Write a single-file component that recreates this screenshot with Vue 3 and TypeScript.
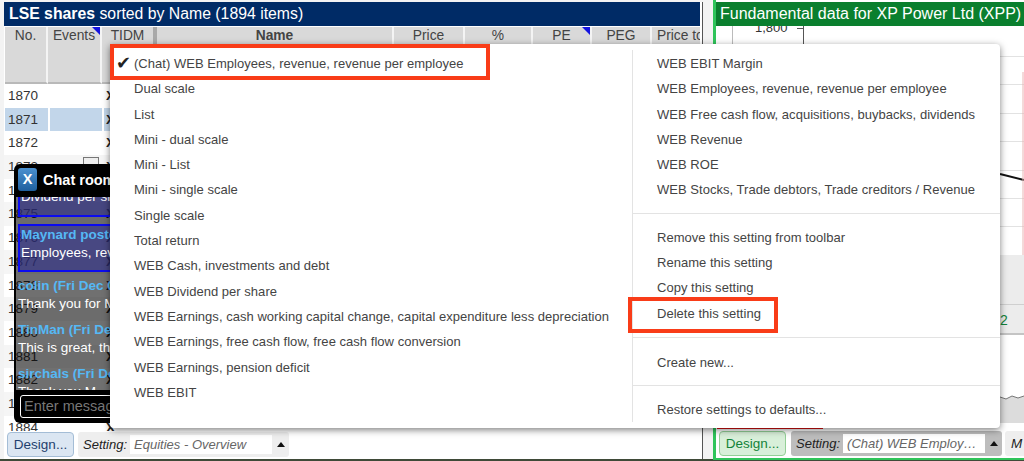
<script setup lang="ts">
const headers = [
  { t: 'No.', w: 43 }, { t: 'Events', w: 54, tri: true }, { t: 'TIDM', w: 55, thick: true },
  { t: 'Name', w: 237, b: true }, { t: 'Price', w: 71 }, { t: '%', w: 68 },
  { t: 'PE', w: 59, tri: true }, { t: 'PEG', w: 60 }, { t: 'Price to', w: 48, clip: true },
]
const rows = [1870, 1871, 1872, 1873, 1874, 1875, 1876, 1877, 1878, 1879, 1880, 1881, 1882, 1883, 1884]
const left = ['Dual scale', 'List', 'Mini - dual scale', 'Mini - List', 'Mini - single scale', 'Single scale', 'Total return',
  'WEB Cash, investments and debt', 'WEB Dividend per share',
  'WEB Earnings, cash working capital change, capital expenditure less depreciation',
  'WEB Earnings, free cash flow, free cash flow conversion', 'WEB Earnings, pension deficit', 'WEB EBIT']
const right1 = ['WEB EBIT Margin', 'WEB Employees, revenue, revenue per employee',
  'WEB Free cash flow, acquisitions, buybacks, dividends', 'WEB Revenue', 'WEB ROE',
  'WEB Stocks, Trade debtors, Trade creditors / Revenue']
const right2 = ['Remove this setting from toolbar', 'Rename this setting', 'Copy this setting', 'Delete this setting']
</script>

<template>
  <div class="page">
    <section class="panel left-panel">
      <div class="title navy"><b>LSE shares</b> sorted by Name (1894 items)</div>
      <div class="thead">
        <div v-for="h in headers" :key="h.t" class="th" :class="{ bold: h.b, clip: h.clip, thick: h.thick }" :style="{ width: h.w + 'px' }">
          {{ h.t }}<i v-if="h.tri" class="tri"></i>
        </div>
      </div>
      <div class="tbody">
        <div v-for="(r, i) in rows" :key="r" class="tr" :class="{ sel: r === 1871, odd: i > 2 && i % 2 === 1 }">
          <span class="no">{{ r }}</span>
          <span class="ev"><i v-if="r === 1873" class="evbox"></i></span>
          <span class="tidm">X</span>
        </div>
      </div>
      <div class="foot">
        <button class="design blue">Design...</button>
        <div class="setting">
          <em>Setting:</em><span class="field">Equities - Overview</span><i class="up"></i>
        </div>
      </div>
    </section>

    <section class="panel right-panel">
      <div class="title green">Fundamental data for XP Power Ltd (XPP)</div>
      <div class="chart">
        <span class="tick">1,800</span>
        <span class="vline v1"></span>
        <span class="vline v2"></span>
        <span class="tickmark"></span>
        <span class="grid"></span>
        <span class="band"></span>
        <svg class="plot" width="308" height="404" viewBox="0 0 308 404">
          <polyline points="284,148 308,154" fill="none" stroke="#111" stroke-width="2" />
          <line x1="307" y1="46" x2="307" y2="229" stroke="#e8b4b4" stroke-width="1" />
          <polygon points="284,371 290,373 296,370 302,372 308,370 308,397 284,397" fill="#dcdcdc" />
          <polyline points="284,371 290,373 296,370 302,372 308,370" fill="none" stroke="#777" stroke-width="1" />
        </svg>
        <span class="num">2</span>
        <span class="redline"></span>
      </div>
      <div class="foot gfoot">
        <button class="design grn">Design...</button>
        <div class="setting dark">
          <em>Setting:</em><span class="field">(Chat) WEB Employ…</span><i class="up"></i>
        </div>
        <div class="more"><em>M</em></div>
      </div>
    </section>

    <div class="chat">
      <div class="chat-head"><span class="x">X</span><b>Chat room</b></div>
      <div class="chat-body">
        <div class="msg boxed first"><p class="w">Dividend per share</p></div>
        <div class="msg boxed"><p class="u">Maynard posted</p><p class="w">Employees, revenue</p></div>
        <div class="msg"><p class="u">colin (Fri Dec 01</p><p class="w">Thank you for M</p></div>
        <div class="msg"><p class="u">TinMan (Fri Dec</p><p class="w">This is great, that</p></div>
        <div class="msg"><p class="u">sirchals (Fri Dec</p><p class="w">Thank you M</p></div>
      </div>
      <div class="chat-foot"><div class="chat-input">Enter message</div></div>
    </div>

    <div class="menu">
      <div class="col lcol">
        <div class="item checked"><span class="check">✔</span>(Chat) WEB Employees, revenue, revenue per employee</div>
        <div v-for="l in left" :key="l" class="item">{{ l }}</div>
      </div>
      <div class="col rcol">
        <div v-for="l in right1" :key="l" class="item">{{ l }}</div>
        <hr class="h1" />
        <div v-for="l in right2" :key="l" class="item">{{ l }}</div>
        <hr class="h2" />
        <div class="item">Create new...</div>
        <hr class="h3" />
        <div class="item">Restore settings to defaults...</div>
      </div>
    </div>

    <div class="red r1"></div>
    <div class="red r2"></div>
  </div>
</template>

<style>
body { margin: 0; }
</style>

<style scoped>
.page {
  position: relative;
  width: 1024px;
  height: 461px;
  overflow: hidden;
  display: flex;
  gap: 10px;
  padding: 2px 0 0 4px;
  box-sizing: border-box;
  background: linear-gradient(#f3f3f3 0 459px, #3f4a38 459px);
  font-family: "Liberation Sans", Arial, sans-serif;
  color: #333;
}
.panel {
  display: flex;
  flex-direction: column;
  box-sizing: border-box;
  background: #fff;
  overflow: hidden;
}
.left-panel {
  width: 699px;
  height: 457px;
  flex: none;
  padding-right: 2px;
  border-right: 1px solid #555;
}
.right-panel {
  flex: 1;
  height: 460px;
  margin-top: -2px;
  padding-top: 2px;
  border-left: 3px solid #2fc45a;
  border-bottom: 2px solid #2fc45a;
}
.title {
  height: 24px;
  flex: none;
  line-height: 24px;
  font-size: 15.8px;
  color: #fff;
  padding-left: 5px;
  white-space: nowrap;
}
.navy { background: #002b66; }
.green { background: #0a7f2e; font-size: 16px; padding-left: 4px; }
.thead {
  display: flex;
  height: 58px;
  flex: none;
  box-sizing: border-box;
  background: #fff;
  padding: 1px 0 0 1px;
}
.th {
  position: relative;
  flex: none;
  box-sizing: border-box;
  background: #d9d9d9;
  border-right: 2px solid #f4f4f4;
  border-bottom: 2px solid #b9b9b9;
  text-align: center;
  font-size: 13.8px;
  line-height: 17px;
  color: #444;
  overflow: hidden;
  white-space: nowrap;
}
.thick { border-right: 4px solid #a9a9a9; }
.bold { font-weight: bold; }
.clip { text-align: left; padding-left: 5px; border-right: 0; }
.tri {
  position: absolute;
  right: 0;
  top: 0;
  width: 0;
  height: 0;
  border-top: 8px solid #1414e0;
  border-left: 8px solid transparent;
}
.tbody { flex: 1; overflow: hidden; min-height: 0; }
.tr {
  display: flex;
  height: 23.7px;
  line-height: 23.7px;
  font-size: 13.5px;
  color: #333;
}
.no { width: 43px; margin-left: 1px; padding-left: 3px; box-sizing: border-box; }
.ev { position: relative; width: 52px; margin: 0 2px 0 2px; }
.evbox {
  position: absolute;
  right: 3px;
  top: 2px;
  width: 14px;
  height: 13px;
  border: 1px solid #777;
  background: #eee;
}
.tidm { font-weight: bold; color: #222; padding-left: 2px; }
.sel .no, .sel .ev, .sel .tidm { background: #c2d6ea; }
.sel .tidm { width: 40px; }
.odd { background: #f5f5f5; }
.foot {
  height: 28px;
  flex: none;
  display: flex;
  align-items: center;
  gap: 4px;
  padding: 0 0 1px 3px;
  box-sizing: border-box;
  background: #fff;
}
.design {
  width: 67px;
  height: 25px;
  padding: 0;
  font: 13.5px "Liberation Sans", Arial, sans-serif;
  border-radius: 4px;
}
.blue { background: #dbe6f2; border: 1px solid #a4bdd6; color: #1f3f6e; }
.grn { background: #d8efd9; border: 1px solid #93cf96; color: #13833a; }
.setting {
  display: flex;
  align-items: center;
  height: 25px;
  padding: 0 4px 0 5px;
  background: #eeeeee;
  border-radius: 3px;
  font-size: 13px;
  color: #222;
}
.dark { background: #bdbdbd; }
.field {
  width: 142px;
  height: 19px;
  line-height: 19px;
  margin-left: 3px;
  padding-left: 4px;
  box-sizing: border-box;
  background: #fff;
  font-style: italic;
  color: #666;
  white-space: nowrap;
}
.up {
  width: 0;
  height: 0;
  margin-left: 5px;
  border-left: 4px solid transparent;
  border-right: 4px solid transparent;
  border-bottom: 5px solid #111;
}
.chart { position: relative; flex: 1; background: #fff; overflow: hidden; min-height: 0; }
.tick { position: absolute; left: 39px; top: -6px; font-size: 13px; color: #333; }
.vline { position: absolute; top: 0; width: 1px; background: #555; }
.v1 { left: 16px; height: 20px; background: #bbb; }
.v2 { left: 87px; height: 20px; }
.tickmark { position: absolute; left: 81px; top: 2px; width: 6px; height: 1px; background: #555; }
.grid {
  position: absolute;
  left: 0;
  right: 0;
  top: 30px;
  height: 199px;
  background: repeating-linear-gradient(#e2e2e2 0 1px, transparent 1px 28.4px);
}
.band {
  position: absolute;
  left: 0;
  right: 0;
  top: 229px;
  height: 80px;
  box-sizing: border-box;
  background: linear-gradient(#ececec 0 49px, #cfcfcf 49px 50px, #ececec 50px);
  border-bottom: 2px solid #c4c4c4;
}
.plot { position: absolute; left: 0; top: 0; }
.num { position: absolute; left: 284px; top: 286px; font-size: 14px; color: #13833a; }
.redline { position: absolute; left: 1px; top: 401px; width: 106px; height: 2px; background: #e01010; }
.gfoot { gap: 5px; }
.more {
  flex: 1;
  height: 25px;
  line-height: 25px;
  margin-left: -2px;
  padding-left: 6px;
  background: #eee;
  border-radius: 3px 0 0 3px;
  font-size: 13.5px;
  color: #222;
}

.chat {
  position: absolute;
  left: 14px;
  top: 164px;
  width: 130px;
  height: 259px;
  display: flex;
  flex-direction: column;
  border-radius: 6px;
  overflow: hidden;
}
.chat-head {
  height: 33px;
  flex: none;
  display: flex;
  align-items: center;
  gap: 6px;
  padding: 0 0 2px 4px;
  box-sizing: border-box;
  background: #000;
  color: #fff;
  font-size: 14.5px;
}
.x {
  width: 19px;
  height: 23px;
  line-height: 23px;
  text-align: center;
  border-radius: 3px;
  background: linear-gradient(#4a90cf, #1f5f9e);
  font-weight: bold;
}
.chat-body {
  flex: 1;
  min-height: 0;
  overflow: hidden;
  border-left: 2px solid #000;
  background: rgba(0, 0, 0, 0.56);
}
.msg { padding: 5px 0 3px 2px; font-size: 13.5px; line-height: 18px; white-space: nowrap; }
.msg p { margin: 0; }
.boxed {
  margin-left: 2px;
  padding: 0 2px 8px 1px;
  border: 2px solid #0b0bf0;
  background: rgba(50, 50, 140, 0.65);
}
.first { margin-top: -11px; margin-bottom: 7px; padding-bottom: 9px; }
.u { color: #55b8f5; font-weight: bold; }
.w { color: #fff; }
.chat-foot {
  height: 33px;
  flex: none;
  padding: 5px 0 0 6px;
  box-sizing: border-box;
  background: #000;
}
.chat-input {
  height: 23px;
  box-sizing: border-box;
  padding-left: 3px;
  border: 1px solid #fff;
  border-radius: 3px;
  line-height: 21px;
  font-size: 14.5px;
  color: #777;
  white-space: nowrap;
}

.menu {
  position: absolute;
  left: 110px;
  top: 44px;
  width: 890px;
  height: 384px;
  display: flex;
  box-sizing: border-box;
  padding-top: 6px;
  background: #fff;
  border-radius: 0 4px 4px 4px;
  box-shadow: 0 2px 7px rgba(0, 0, 0, 0.5);
  font-size: 13px;
  letter-spacing: 0.03px;
  color: #444;
}
.col { flex: none; }
.lcol {
  width: 523px;
  height: 372px;
  padding-left: 24px;
  box-sizing: border-box;
  border-right: 1px solid #e3e3e3;
}
.rcol { flex: 1; padding-left: 24px; }
.item { height: 25.3px; line-height: 27px; white-space: nowrap; }
.checked { position: relative; }
.check { position: absolute; left: -18px; top: 0; font-size: 18px; color: #222; }
hr { margin: 0 0 0 -24px; border: 0; border-top: 1px solid #e3e3e3; }
.h1 { margin-top: 11px; margin-bottom: 10px; }
.h2 { margin-top: 12px; margin-bottom: 11px; }
.h3 { margin-top: 11px; margin-bottom: 10px; }
.red { position: absolute; border: 4px solid #f93c18; box-sizing: border-box; }
.r1 { left: 110px; top: 44px; width: 380px; height: 36px; }
.r2 { left: 628px; top: 297px; width: 150px; height: 36px; }
</style>
